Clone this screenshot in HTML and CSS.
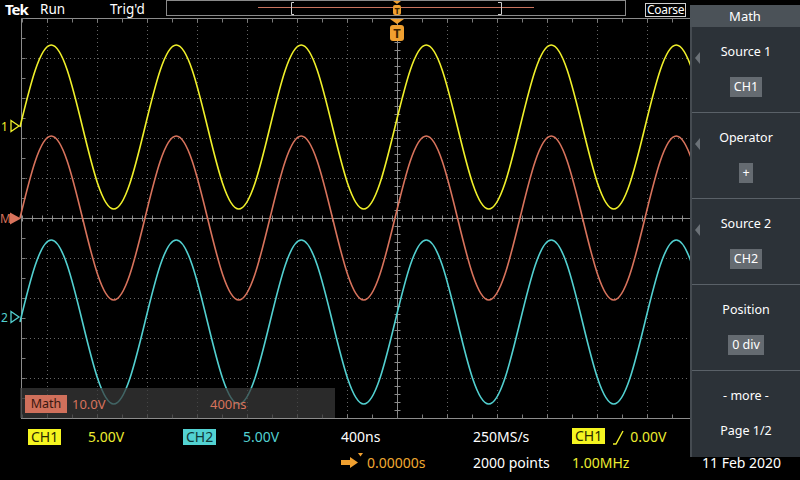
FILE: index.html
```html
<!DOCTYPE html>
<html lang="en">
<head>
<meta charset="utf-8">
<title>Tek Scope - Math</title>
<link rel="stylesheet" href="styles.css">
</head>
<body>
<div class="screen">
  <header class="topbar">
    <span class="tek">Tek</span>
    <span class="run">Run</span>
    <span class="trig">Trig'd</span>
    <svg class="record" width="460" height="16" viewBox="166 0 460 16">
      <rect x="166.5" y="0.5" width="459" height="15" fill="none" stroke="#8a8a8a"/>
      <path d="M258,7.5H534" stroke="#c9735e" stroke-width="1"/>
      <path d="M294,2.5H291.5V14.5H294 M498,2.5H501.5V14.5H498" fill="none" stroke="#cfcfcf"/>
      <path d="M393,1H401L397,4Z" fill="#f0a030"/>
      <rect x="393" y="5" width="8" height="10" rx="2" fill="#f0a030"/>
      <text x="397" y="13.5" class="tmark-s">T</text>
    </svg>
    <span class="coarse">Coarse</span>
  </header>

  <div class="scope">
    <svg class="plot" width="800" height="402" viewBox="0 18 800 402">
      <defs>
        <path id="sine" fill="none" d="M0,0 c10.19,-42 20,-82 31.25,-82 c11.25,0 21.06,40 31.25,82 c10.19,42 20,82 31.25,82 c11.25,0 21.06,-40 31.25,-82 c10.19,-42 20,-82 31.25,-82 c11.25,0 21.06,40 31.25,82 c10.19,42 20,82 31.25,82 c11.25,0 21.06,-40 31.25,-82 c10.19,-42 20,-82 31.25,-82 c11.25,0 21.06,40 31.25,82 c10.19,42 20,82 31.25,82 c11.25,0 21.06,-40 31.25,-82 c10.19,-42 20,-82 31.25,-82 c11.25,0 21.06,40 31.25,82 c10.19,42 20,82 31.25,82 c11.25,0 21.06,-40 31.25,-82 c10.19,-42 20,-82 31.25,-82 c11.25,0 21.06,40 31.25,82 c10.19,42 20,82 31.25,82 c11.25,0 21.06,-40 31.25,-82 c10.19,-42 20,-82 31.25,-82 c11.25,0 21.06,40 31.25,82 c10.19,42 20,82 31.25,82 c11.25,0 21.06,-40 31.25,-82"/>
      </defs>
      <g fill="none">
        <path stroke="#666" stroke-dasharray="1 3" d="M47.5,18V418 M97.5,18V418 M147.5,18V418 M197.5,18V418 M247.5,18V418 M297.5,18V418 M347.5,18V418 M447.5,18V418 M497.5,18V418 M547.5,18V418 M597.5,18V418 M647.5,18V418 M697.5,18V418 M747.5,18V418"/>
        <path stroke="#666" stroke-dasharray="1 3" d="M22,58.5H772 M22,98.5H772 M22,138.5H772 M22,178.5H772 M22,258.5H772 M22,298.5H772 M22,338.5H772 M22,378.5H772"/>
        <path stroke="#8c8c8c" d="M21.5,418 V18.5 H772 M21,418.5 H772"/>
        <path stroke="#8c8c8c" d="M21,218.5H772 M397.5,18V418"/>
        <path stroke="#8c8c8c" stroke-width="6" stroke-dasharray="1 9" d="M22,218.5H772"/>
        <path stroke="#8c8c8c" stroke-width="6" stroke-dasharray="1 7" d="M397.5,18V418"/>
        <path stroke="#7a7a7a" stroke-width="4" stroke-dasharray="1 24" d="M22,20.5H772 M22,416.5H772"/>
        <path stroke="#7a7a7a" stroke-width="4" stroke-dasharray="1 19" d="M23.5,18V418"/>
      </g>
      <g stroke-width="1.6" stroke-linejoin="round">
        <use href="#sine" x="20" y="218" stroke="#d8735c"/>
        <use href="#sine" x="20" y="322" stroke="#52d0d0"/>
        <use href="#sine" x="20" y="127" stroke="#f0f02a"/>
      </g>
      <text x="1" y="131" class="mk mk-ch1">1</text>
      <path d="M11,120.5L19,126L11,131.5Z" fill="none" stroke="#f0f02a" stroke-width="1.3"/>
      <text x="0" y="223" class="mk mk-math">M</text>
      <path d="M10,212.5L21,218.5L10,224.5Z" fill="#d8735c"/>
      <text x="1" y="322" class="mk mk-ch2">2</text>
      <path d="M11,311.5L19,317L11,322.5Z" fill="none" stroke="#52d0d0" stroke-width="1.3"/>
      <path d="M390,19H404L397,24Z" fill="#f0a030"/>
      <rect x="390" y="25" width="14" height="16" rx="3" fill="#f0a030"/>
      <text x="397" y="38" class="tmark">T</text>
    </svg>

    <div class="math-badge">
      <span class="math-label">Math</span>
      <span class="math-scale">10.0V</span>
      <span class="math-time">400ns</span>
    </div>
  </div>

  <footer class="readouts">
    <span><span class="chip chip-ch1">CH1</span></span>
    <span class="c-yellow">5.00V</span>
    <span><span class="chip chip-ch2">CH2</span></span>
    <span class="c-cyan">5.00V</span>
    <span>400ns</span>
    <span>250MS/s</span>
    <span class="trig-read"><span class="chip chip-ch1">CH1</span><svg class="slope" width="16" height="16" viewBox="0 0 16 16"><path d="M3,15H6L13,2" fill="none" stroke="#f0f02a" stroke-width="1.4"/></svg><span class="c-yellow">0.00V</span></span>
    <span class="pos-read"><svg class="arrow" width="24" height="18" viewBox="0 0 24 18"><path d="M0,7H9V4L17,9.5L9,15V12H0Z" fill="#f0a030"/><path d="M17,0H22L19.5,3.5Z" fill="#f0a030"/></svg><span class="c-orange">0.00000s</span></span>
    <span>2000 points</span>
    <span class="c-yellow">1.00MHz</span>
    <span>11 Feb 2020</span>
  </footer>

  <aside class="menu">
    <div class="menu-title">Math</div>
    <div class="menu-body">
      <div class="item"><span class="arrow-l"></span><span class="item-label">Source 1</span><span class="item-value">CH1</span></div>
      <div class="item"><span class="arrow-l"></span><span class="item-label">Operator</span><span class="item-value op">+</span></div>
      <div class="item"><span class="arrow-l"></span><span class="item-label">Source 2</span><span class="item-value">CH2</span></div>
      <div class="item"><span class="item-label">Position</span><span class="item-value">0 div</span></div>
      <div class="item last"><span class="item-label">- more -</span><span class="item-page">Page 1/2</span></div>
    </div>
  </aside>
</div>
</body>
</html>
```

FILE: styles.css
```css
html, body {
  margin: 0;
  background: #000;
}

.screen {
  position: relative;
  width: 800px;
  height: 480px;
  overflow: hidden;
  background: #000;
  color: #fff;
  font-family: "Noto Sans", "Open Sans", sans-serif;
}

/* ---------- top bar ---------- */
.topbar {
  display: flex;
  align-items: flex-start;
  height: 18px;
  padding-left: 5px;
  font-size: 13.5px;
  line-height: 18px;
}

.tek {
  width: 35px;
  font-weight: 700;
  font-size: 15px;
  letter-spacing: -1px;
}

.run { width: 70px; }
.trig { width: 56px; }

.record { display: block; }

.tmark-s {
  fill: #3a2400;
  font-size: 9px;
  font-weight: 700;
  text-anchor: middle;
}

.coarse {
  margin-left: 19px;
  margin-top: 3px;
  height: 12px;
  padding: 0 1px;
  border: 1px solid #d0d0d0;
  font-size: 12px;
  line-height: 12px;
  letter-spacing: -0.3px;
}

/* ---------- scope area ---------- */
.scope {
  position: relative;
  height: 402px;
}

.plot { display: block; }

.mk {
  font-size: 12px;
}
.mk-ch1 { fill: #f0f02a; }
.mk-ch2 { fill: #52d0d0; }
.mk-math { fill: #d8735c; }

.tmark {
  fill: #3a2400;
  font-size: 13px;
  font-weight: 700;
  text-anchor: middle;
}

.math-badge {
  position: absolute;
  left: 20px;
  top: 370px;
  width: 315px;
  height: 30px;
  display: flex;
  align-items: center;
  background: rgba(58, 58, 58, 0.72);
  font-size: 13px;
  color: #d8735c;
}

.math-label {
  margin-left: 5px;
  margin-top: 2px;
  width: 42px;
  height: 18px;
  line-height: 18px;
  text-align: center;
  background: #d0705b;
  color: #3a1810;
  font-size: 12.5px;
}

.math-scale {
  width: 138px;
  margin-left: 5px;
  margin-top: 2px;
}

.math-time { margin-top: 2px; }

/* ---------- readouts ---------- */
.readouts {
  display: grid;
  grid-template-columns: 60px 95px 60px 98px 132px 99px 130px 1fr;
  grid-template-rows: 26px 26px;
  padding: 4px 0 0 28px;
  font-size: 14px;
  line-height: 26px;
  white-space: nowrap;
}

.chip {
  display: inline-block;
  height: 16px;
  line-height: 16px;
  padding: 0 3px;
  vertical-align: middle;
  margin-top: -2px;
}
.chip-ch1 { background: #f5f520; color: #2a2a00; }
.chip-ch2 { background: #52d2d2; color: #0f3636; }

.c-yellow { color: #ecec30; }
.c-cyan { color: #52d0d0; }
.c-orange { color: #f0a830; }

.trig-read {
  display: flex;
  align-items: center;
}
.slope { margin: 0 4px 0 5px; }

.pos-read {
  grid-column: 5;
  display: flex;
  align-items: center;
}
.arrow { margin-right: 2px; margin-top: -2px; }

/* ---------- side menu ---------- */
.menu {
  position: absolute;
  left: 690px;
  top: 5px;
  width: 110px;
  font-size: 12.5px;
}

.menu-title {
  height: 22px;
  line-height: 22px;
  text-align: center;
  background: #4b5258;
  font-size: 13px;
}

.menu-body {
  background: #2c3238;
  border-left: 2px solid #454b51;
}

.item {
  position: relative;
  height: 86px;
  box-sizing: border-box;
  padding-top: 15px;
  border-bottom: 1px solid #5a6168;
  display: flex;
  flex-direction: column;
  align-items: center;
}
.item.last { border-bottom: none; }

.item-label { line-height: 20px; }

.item-value {
  margin-top: 15px;
  height: 20px;
  line-height: 20px;
  padding: 0 4px;
  background: #656b71;
}
.item-value.op { padding: 0 3px; }

.item-page {
  margin-top: 15px;
  line-height: 20px;
}

.arrow-l {
  position: absolute;
  left: 3px;
  top: 25px;
  width: 0;
  height: 0;
  border-top: 6px solid transparent;
  border-bottom: 6px solid transparent;
  border-right: 5px solid #6b7177;
}
```
